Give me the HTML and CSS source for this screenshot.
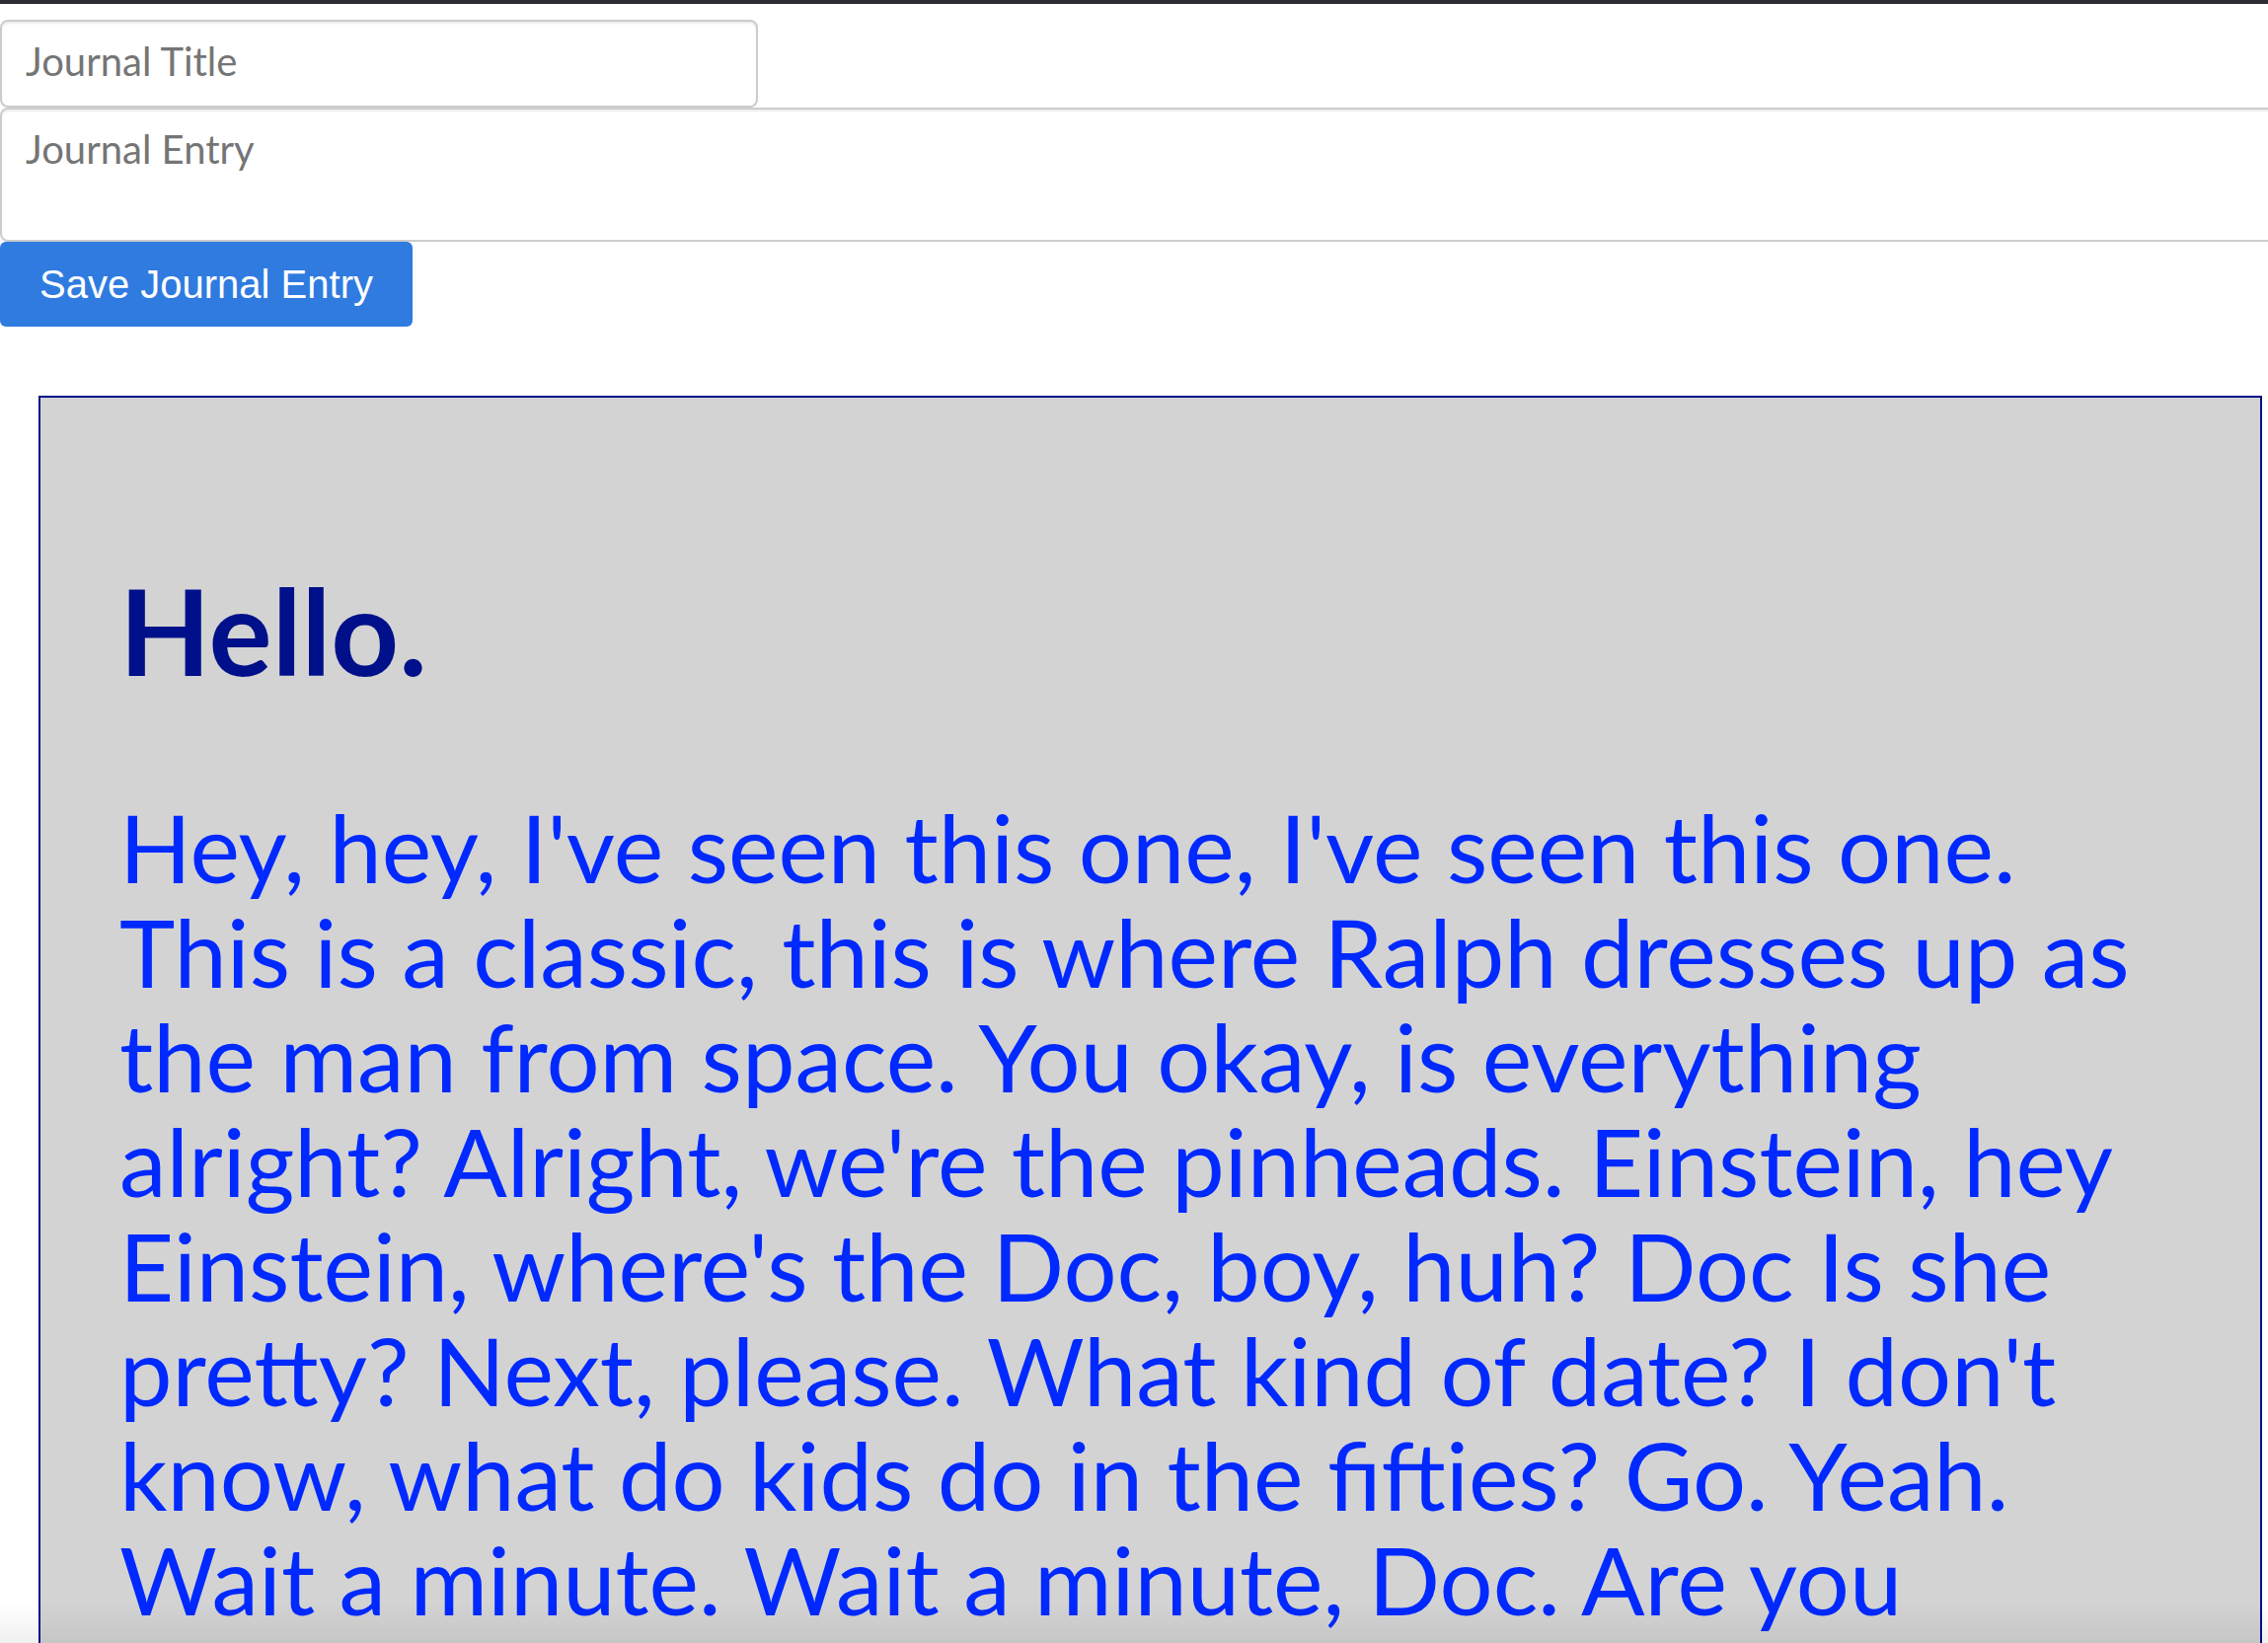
FILE: index.html
```html
<!DOCTYPE html>
<html lang="en">
<head>
<meta charset="utf-8">
<title>Journal</title>
<link rel="stylesheet" href="styles.css">
</head>
<body>
<div class="chrome-edge"></div>
<form class="journal-form">
  <input class="field field-title" type="text" placeholder="Journal Title">
  <textarea class="field field-entry" placeholder="Journal Entry"></textarea>
  <button class="save-btn" type="button">Save Journal Entry</button>
</form>
<section class="entry">
  <h1 class="entry-title">Hello.</h1>
  <p class="entry-body">Hey, hey, I've seen this one, I've seen this one. This is a classic, this is where Ralph dresses up as the man from space. You okay, is everything alright? Alright, we're the pinheads. Einstein, hey Einstein, where's the Doc, boy, huh? Doc Is she pretty? Next, please. What kind of date? I don't know, what do kids do in the fifties? Go. Yeah. Wait a minute. Wait a minute, Doc. Are you</p>
</section>
<div class="window-fade"></div>
</body>
</html>
```

FILE: styles.css
```css
html, body {
  margin: 0;
  padding: 0;
  height: 100%;
  overflow: hidden;
  background: #ffffff;
}

body {
  font-family: "Lato", "Open Sans", sans-serif;
}

.chrome-edge {
  height: 4px;
  background: #2c2d31;
}

.journal-form {
  display: flex;
  flex-direction: column;
  align-items: flex-start;
  padding-top: 16px;
}

.field {
  box-sizing: border-box;
  margin: 0;
  border: 2px solid #cccccc;
  border-radius: 8px;
  background: #ffffff;
  box-shadow: inset 0 2px 2px rgba(0, 0, 0, 0.075);
  font-family: "Lato", "Open Sans", sans-serif;
  font-size: 40px;
  color: #555555;
  outline: none;
}

.field::placeholder {
  color: #757575;
  opacity: 1;
}

.field-title {
  width: 768px;
  height: 89px;
  padding: 0 24px 6px;
}

.field-entry {
  width: 2320px;
  height: 136px;
  padding: 12px 24px;
  line-height: 57px;
  resize: none;
  display: block;
}

.save-btn {
  box-sizing: border-box;
  height: 86px;
  margin: 0;
  padding: 0 40px;
  border: none;
  border-radius: 6px;
  background: #2f7be0;
  color: #ffffff;
  font-family: "Liberation Sans", Arial, sans-serif;
  font-size: 40px;
  cursor: pointer;
}

.entry {
  margin: 70px 0 0 39px;
  width: 2253px;
  box-sizing: border-box;
  border: 2px solid #00108a;
  background: #d3d3d3;
  padding: 0 80px 80px 80px;
}

.entry-title {
  margin: 0;
  padding-top: 176px;
  font-size: 120px;
  line-height: 120px;
  font-weight: 700;
  color: #00108a;
}

.entry-body {
  margin: 106px 0 0;
  font-size: 95.5px;
  line-height: 106px;
  color: #0029ff;
}

.window-fade {
  position: fixed;
  left: 0;
  right: 0;
  bottom: 0;
  height: 40px;
  background: linear-gradient(rgba(0, 0, 0, 0), rgba(0, 0, 0, 0.06));
  pointer-events: none;
}
```
